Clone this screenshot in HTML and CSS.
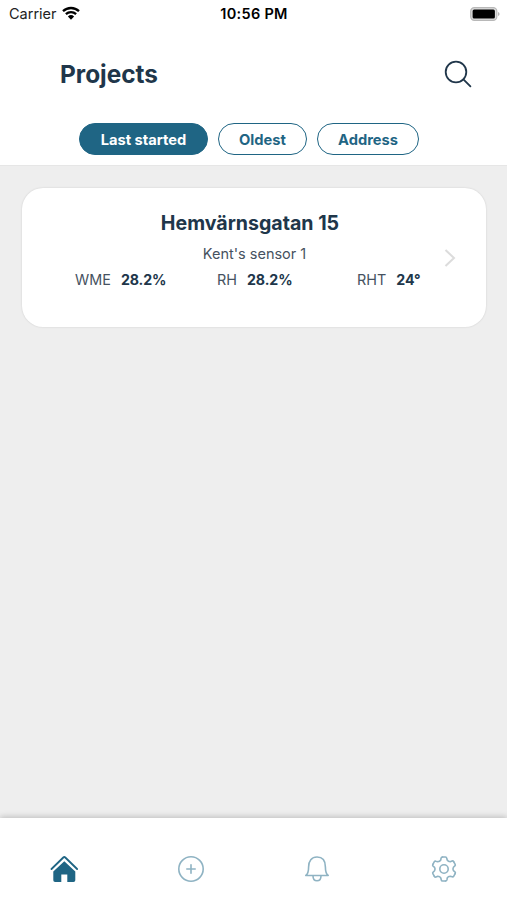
FILE: index.html
```
<!DOCTYPE html>
<html lang="en">
<head>
    <meta charset="UTF-8">
    <meta name="viewport" content="width=device-width, initial-scale=1">
    <title>Projects</title>
    <link rel="stylesheet" href="styles.css">
</head>
<body>
    <div class="app">
        <header class="header">
            <div class="status-bar">
                <div class="carrier">
                    <span>Carrier</span>
                    <svg class="wifi" viewBox="0 0 18 14">
                        <path d="M1 5.2a11.6 11.6 0 0 1 16 0M3.9 8.2a7.4 7.4 0 0 1 10.2 0" fill="none" stroke="#000" stroke-width="2.3"/>
                        <path d="M9 13.7 5.9 10.5a4.5 4.5 0 0 1 6.2 0z"/>
                    </svg>
                </div>
                <div class="time">10:56 PM</div>
                <div class="battery">
                    <svg viewBox="0 0 30 14" width="30" height="14">
                        <rect x=".7" y=".7" width="26.1" height="12.6" rx="3.6" fill="#ddd" stroke="#b8b8b8" stroke-width="1.2"/>
                        <rect x="2.6" y="2.4" width="22.3" height="9.2" rx="1.5"/>
                        <path d="M28 5v4q1.6-.5 1.6-2T28 5z" fill="#b5b5b5"/>
                    </svg>
                </div>
            </div>

            <div class="title-row">
                <h1>Projects</h1>
                <button class="search" aria-label="Search">
                    <svg viewBox="0 0 28 28" width="28" height="28">
                        <circle cx="12" cy="12" r="10.3"/>
                        <path d="m19.4 19.4 7 7"/>
                    </svg>
                </button>
            </div>

            <div class="filters">
                <button class="pill last active">Last started</button>
                <button class="pill oldest">Oldest</button>
                <button class="pill address">Address</button>
            </div>
        </header>

        <main class="content">
            <div class="card">
                <div class="card-body">
                    <h2>Hemvärnsgatan 15</h2>
                    <p class="sensor">Kent's sensor 1</p>
                    <div class="readings">
                        <div class="reading">WME <b>28.2%</b></div>
                        <div class="reading">RH <b>28.2%</b></div>
                        <div class="reading">RHT <b>24°</b></div>
                    </div>
                </div>
                <svg class="chevron" viewBox="0 0 12 18">
                    <path d="m1.5 1 8.5 8-8.5 8"/>
                </svg>
            </div>
        </main>

        <nav class="tab-bar">
            <a class="tab active">
                <svg viewBox="0 0 28 28" width="28" height="28">
                    <path class="roof" d="M1.5 14 13.3 2.500q1-.9 2 0L27.100 14"/>
                    <path class="house" d="M14.300 6.200 25.300 16.500v8.700q0 1.800-1.800 1.800h-6.200v-7.600h-6V27H5.100q-1.800 0-1.800-1.800v-8.700z"/>
                </svg>
            </a>
            <a class="tab">
                <svg viewBox="0 0 28 28" width="28" height="28">
                    <circle cx="14" cy="14" r="12.2"/>
                    <path d="M14 9.800v8.400M9.800 14h8.400"/>
                </svg>
            </a>
            <a class="tab">
                <svg viewBox="0 0 28 28" width="28" height="28">
                    <path d="M2.8 20.5h22.4c-2.2-1.6-2.8-4-2.8-8.500C22.4 5.800 19.400 2 14 2S5.600 5.800 5.600 12c0 4.500-.6 6.900-2.800 8.500z"/>
                    <path d="M10 20.700c0 3.500 1.500 5.100 4 5.100s4-1.600 4-5.100"/>
                </svg>
            </a>
            <a class="tab">
                <svg viewBox="0 0 28 28" width="28" height="28">
                    <path id="tooth" d="M12.500 2h3Q16.500 2 16.700 3L17.200 5Q18.200 6.700 20.200 6.700L22 6Q23 5.660 23.640 6.700"/>
                    <use href="#tooth" transform="rotate(60 14 14)"/>
                    <use href="#tooth" transform="rotate(120 14 14)"/>
                    <use href="#tooth" transform="rotate(180 14 14)"/>
                    <use href="#tooth" transform="rotate(240 14 14)"/>
                    <use href="#tooth" transform="rotate(300 14 14)"/>
                    <circle cx="14" cy="14" r="4.200"/>
                </svg>
            </a>
        </nav>
    </div>
</body>
</html>
```
FILE: styles.css
```
:root {
    --primary: #1f6584;
    --accent: #8fb3c3;
    --text: #20364a;
    --muted: #46525f;
    --background: #eeeeee;
}

* {
    box-sizing: border-box;
}

body {
    margin: 0;
    font-family: Inter, "Liberation Sans", sans-serif;
    color: var(--text);
    background: var(--background);
}

h1, h2, p {
    margin: 0;
}

button {
    font-family: inherit;
    padding: 0;
    cursor: pointer;
}

.app {
    height: 100vh;
    display: flex;
    flex-direction: column;
}

.header {
    height: 166px;
    background: white;
    border-bottom: 1px solid #e6e6e6;
}

/* Status bar */
.status-bar {
    height: 28px;
    display: grid;
    grid-template-columns: 1fr auto 1fr;
    align-items: center;
    padding: 0 7px 0 9px;
    color: #000;
    font-size: 14.5px;
}

.carrier {
    display: flex;
    align-items: center;
    gap: 5px;
    padding-bottom: 2px;
    color: #222;
}

.wifi {
    width: 18px;
    height: 14px;
}

.time {
    padding: 0 1px 2px 0;
    font-weight: 600;
    letter-spacing: 0.3px;
}

.battery {
    display: flex;
    justify-content: flex-end;
    padding-bottom: 1px;
}

/* Title and search */
.title-row {
    height: 92px;
    padding: 0 35px 0 60px;
    display: flex;
    align-items: center;
    justify-content: space-between;
}

h1 {
    padding-bottom: 1px;
    font-size: 24.4px;
    font-weight: 700;
    line-height: 30px;
}

.search {
    display: flex;
    border: none;
    background: none;
}

.search svg {
    fill: none;
    stroke: var(--text);
    stroke-width: 1.8;
    stroke-linecap: round;
}

/* Sorting */
.filters {
    display: flex;
    gap: 10px;
    margin: 3px 0 0 79px;
}

.pill {
    height: 32px;
    padding-top: 1px;
    border: 1.5px solid var(--primary);
    border-radius: 16px;
    background: white;
    color: var(--primary);
    font-size: 14.7px;
    font-weight: 700;
}

.pill.active {
    background: var(--primary);
    color: white;
}

.last {
    width: 129px;
}

.oldest {
    width: 89px;
}

.address {
    width: 102px;
}

.content {
    flex: 1;
    padding: 22px 21px 22px 22px;
}

.card {
    height: 139px;
    display: flex;
    padding: 21px 30px 0 53px;
    background: white;
    border-radius: 21px;
    box-shadow: 0 0 2px rgba(0, 0, 0, 0.15);
}

.card-body {
    width: 350px;
    text-align: center;
}

h2 {
    font-size: 19.6px;
    font-weight: 700;
    line-height: 28px;
}

.sensor {
    margin-top: 5px;
    padding-left: 9px;
    font-size: 14.5px;
    line-height: 24px;
    color: var(--muted);
}

.readings {
    display: grid;
    grid-template-columns: 142px 140px auto;
    font-size: 14.4px;
    line-height: 28px;
    text-align: left;
    color: var(--muted);
}

.reading b {
    margin-left: 6px;
    font-size: 14.2px;
    font-weight: 700;
    letter-spacing: -0.1px;
    color: var(--text);
}

.chevron {
    width: 12px;
    height: 18px;
    margin: 40px 0 0 auto;
    fill: none;
    stroke: #dcdcdc;
    stroke-width: 2;
}

.tab-bar {
    height: 82px;
    display: flex;
    padding: 20px 0 0 1px;
    background: white;
    box-shadow: 0 -1px 6px rgba(0, 0, 0, 0.22);
}

.tab {
    flex: 1;
    display: flex;
    align-items: center;
    justify-content: center;
}

.tab svg {
    fill: none;
    stroke: var(--accent);
    stroke-width: 1.6;
    stroke-linejoin: round;
    stroke-linecap: round;
}

.tab .roof {
    stroke: var(--primary);
    stroke-width: 1.8;
}

.tab .house {
    fill: var(--primary);
    stroke: none;
}
```
